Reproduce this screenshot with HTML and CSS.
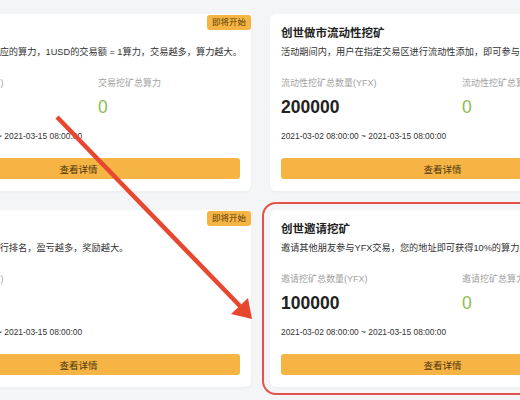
FILE: index.html
```html
<!DOCTYPE html>
<html lang="zh-CN">
<head>
    <meta charset="UTF-8">
    <meta name="viewport" content="width=device-width, initial-scale=1.0">
    <title>创世挖矿活动</title>
    <link rel="stylesheet" href="styles.css">
</head>
<body>
    <div class="page">
        <div class="activity-grid">
            <div class="card">
                <span class="badge">即将开始</span>
                <h2 class="card-title">创世交易挖矿</h2>
                <p class="card-desc">活动期间交易产生对应的算力，1USD的交易额 = 1算力，交易越多，算力越大。</p>
                <div class="stats">
                    <div class="stat">
                        <div class="stat-label">交易挖矿总数量(YFX)</div>
                        <div class="stat-value">300000</div>
                    </div>
                    <div class="stat">
                        <div class="stat-label">交易挖矿总算力</div>
                        <div class="stat-value green">0</div>
                    </div>
                </div>
                <div class="card-time">2021-03-02 08:00:00 ~ 2021-03-15 08:00:00</div>
                <button class="detail-button">查看详情</button>
            </div>

            <div class="card">
                <h2 class="card-title">创世做市流动性挖矿</h2>
                <p class="card-desc">活动期间内，用户在指定交易区进行流动性添加，即可参与流动性挖矿。</p>
                <div class="stats">
                    <div class="stat">
                        <div class="stat-label">流动性挖矿总数量(YFX)</div>
                        <div class="stat-value">200000</div>
                    </div>
                    <div class="stat">
                        <div class="stat-label">流动性挖矿总算力</div>
                        <div class="stat-value green">0</div>
                    </div>
                </div>
                <div class="card-time">2021-03-02 08:00:00 ~ 2021-03-15 08:00:00</div>
                <button class="detail-button">查看详情</button>
            </div>

            <div class="card">
                <span class="badge">即将开始</span>
                <h2 class="card-title">创世交易大赛</h2>
                <p class="card-desc">根据用户交易盈亏进行排名，盈亏越多，奖励越大。</p>
                <div class="stats">
                    <div class="stat">
                        <div class="stat-label">大赛奖励总数量(YFX)</div>
                        <div class="stat-value">50000</div>
                    </div>
                </div>
                <div class="card-time">2021-03-02 08:00:00 ~ 2021-03-15 08:00:00</div>
                <button class="detail-button">查看详情</button>
            </div>

            <div class="card highlight">
                <h2 class="card-title">创世邀请挖矿</h2>
                <p class="card-desc">邀请其他朋友参与YFX交易，您的地址即可获得10%的算力奖励。</p>
                <div class="stats">
                    <div class="stat">
                        <div class="stat-label">邀请挖矿总数量(YFX)</div>
                        <div class="stat-value">100000</div>
                    </div>
                    <div class="stat">
                        <div class="stat-label">邀请挖矿总算力</div>
                        <div class="stat-value green">0</div>
                    </div>
                </div>
                <div class="card-time">2021-03-02 08:00:00 ~ 2021-03-15 08:00:00</div>
                <button class="detail-button">查看详情</button>
            </div>
        </div>

        <!-- 注释用の矢印 -->
        <svg class="arrow" width="520" height="400" viewBox="0 0 520 400">
            <line x1="57" y1="117" x2="240" y2="306" stroke="#e8472f" stroke-width="4.5"/>
            <polygon points="252,319 231,314 248,298" fill="#e8472f"/>
        </svg>
    </div>
</body>
</html>
```

FILE: styles.css
```css
* {
    margin: 0;
    padding: 0;
    box-sizing: border-box;
}

html, body {
    overflow: hidden;
}

body {
    font-family: 'Liberation Sans', 'Noto Sans CJK SC', sans-serif;
    background: #f4f5f7;
    color: #333;
    width: 520px;
    height: 400px;
}

.page {
    position: relative;
    height: 400px;
}

.activity-grid {
    display: grid;
    grid-template-columns: 345px 345px;
    gap: 19px;
    padding-top: 14px;
    margin-left: -94px;
}

.card {
    position: relative;
    background: white;
    border-radius: 6px;
    height: 177px;
    padding: 11px 11px 12px;
    box-shadow: 0 1px 3px rgba(0, 0, 0, 0.04);
}

.card.highlight {
    outline: 2px solid #e4524a;
    outline-offset: 6px;
}

.badge {
    position: absolute;
    top: 1px;
    right: 0;
    background: #f5b443;
    color: #5a3c0c;
    font-size: 8.5px;
    line-height: 15px;
    padding: 0 5px;
    border-radius: 3px;
}

.card-title {
    font-size: 11.5px;
    font-weight: bold;
    line-height: 16px;
    color: #222;
}

.card-desc {
    margin-top: 4px;
    font-size: 9.2px;
    line-height: 14px;
    white-space: nowrap;
    color: #333;
}

.stats {
    display: grid;
    grid-template-columns: 181px 1fr;
    margin-top: 17px;
}

.stat-label {
    font-size: 9px;
    line-height: 14px;
    color: #a3a3a3;
    white-space: nowrap;
}

.stat-value {
    margin-top: 5px;
    font-size: 17.5px;
    font-weight: bold;
    line-height: 24px;
    color: #222;
}

.stat-value.green {
    color: #8bbd4c;
    font-weight: normal;
}

.card-time {
    margin-top: 10px;
    font-size: 8.4px;
    line-height: 14px;
    color: #333;
    white-space: nowrap;
}

.detail-button {
    display: block;
    width: 100%;
    height: 21px;
    margin-top: 15px;
    background: #f5b443;
    color: #4a3510;
    border: none;
    border-radius: 3px;
    font-family: inherit;
    font-size: 9.5px;
    cursor: pointer;
}

.arrow {
    position: absolute;
    top: 0;
    left: 0;
    pointer-events: none;
}
```
